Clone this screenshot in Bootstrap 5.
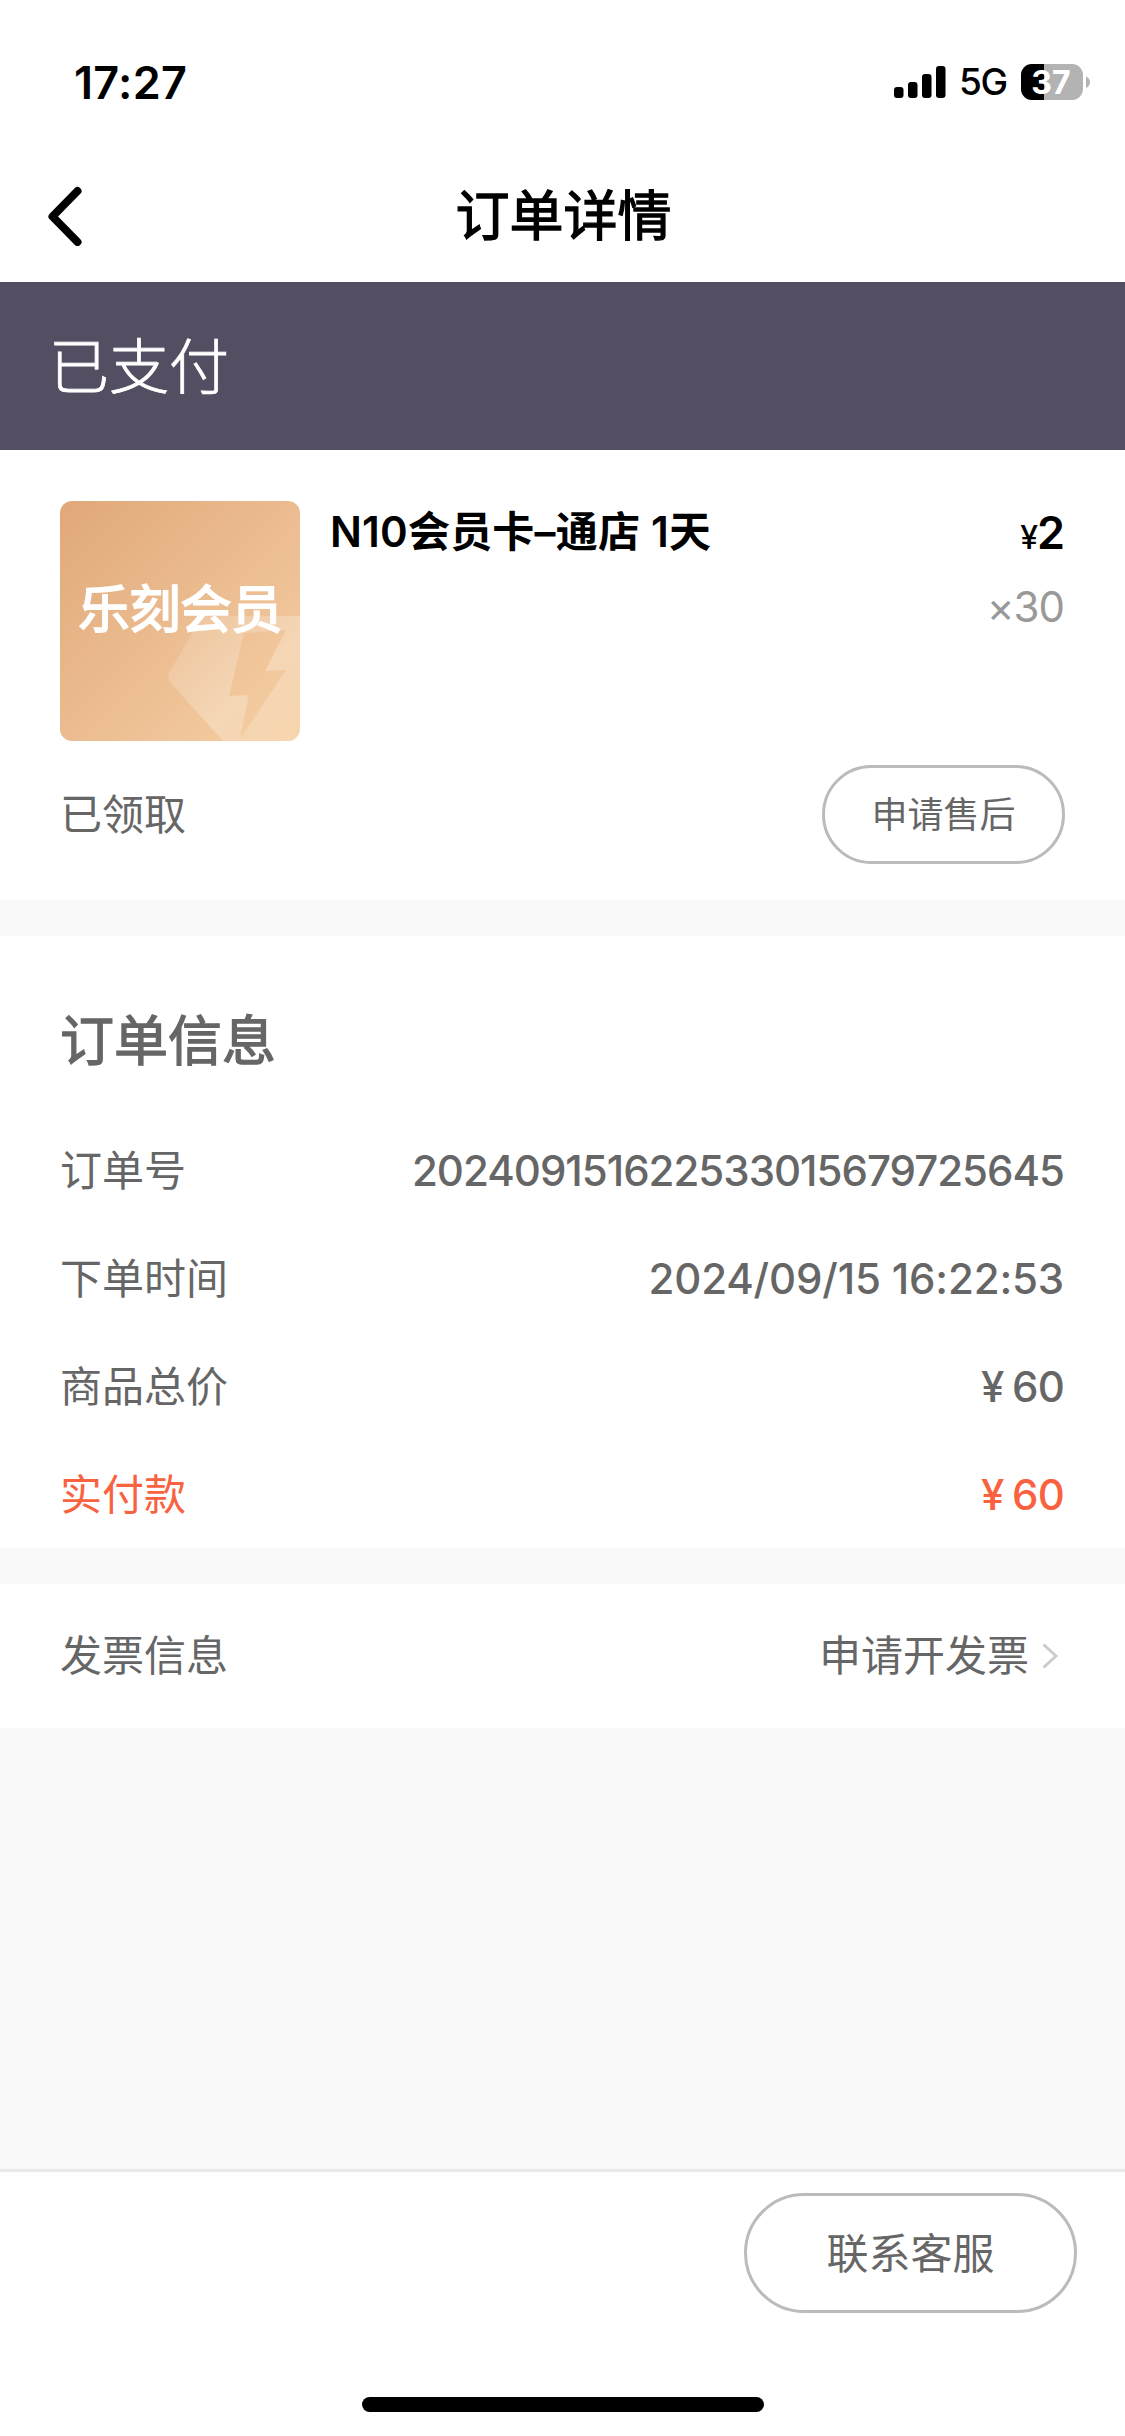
<!DOCTYPE html>
<html lang="zh-CN">
<head>
<meta charset="utf-8">
<meta name="viewport" content="width=device-width, initial-scale=1">
<title>订单详情</title>
<link href="https://cdn.jsdelivr.net/npm/bootstrap@5.3.0/dist/css/bootstrap.min.css" rel="stylesheet">
<style>
body{font-family:Inter,"Noto Sans CJK SC",sans-serif;font-size:42px;line-height:60px;color:#666;background:#f9f9f9}
.screen{height:2436px;overflow:hidden}
.status-bar{height:150px;padding:53px 34px 0 74px}
.clock{font-size:45px;font-weight:600;color:#000;letter-spacing:.3px}
.net-status{height:60px;margin-top:-1px}
.net{font-size:37px;font-weight:500;color:#000;letter-spacing:-1.4px;width:48px;margin:0 14px 0 13px}
.title-bar{height:132px;padding:0 48px}
.title-bar h1{font-size:54px;line-height:80px;font-weight:400;color:#000;padding:1px 34px 0 0}
.medium-cjk{-webkit-text-stroke:1.3px currentColor}
.state{height:168px;padding:2px 49px 0;background:#544e63;font-size:60px;font-weight:300;-webkit-text-stroke:.8px currentColor}
.goods{height:450px;padding:51px 60px 0}
.thumb{width:240px;height:240px;border-radius:12px}
.goods-name{color:#000;font-weight:600;padding:1px 0 0 30px;letter-spacing:.2px}
.taken{margin-top:24px}
.pill{border:3px solid #bbb;color:#666;border-radius:60px;padding:0}
.pill-sm{width:243px;height:99px;font-size:36px}
.pill-lg{width:333px;height:120px;font-size:42px}
.block{margin-top:36px}
.order{height:612px;padding:66px 60px 0}
.order h2{font-size:54px;line-height:80px;font-weight:400;margin:0 0 59px}
.line{height:108px}
.num{font-weight:500;letter-spacing:-.15px;padding-right:1px}
.num-long{letter-spacing:-1px}
.num-sum{word-spacing:-2px;letter-spacing:-.8px}
.paid{color:#f96240}
.invoice{height:144px;padding:0 60px}
.arrow{margin-left:13px}
.foot{height:267px;border-top:3px solid #e8e8ea;padding:21px 48px 24px 0}
.home-bar{width:402px;height:15px;border-radius:8px;background:#000;margin-left:362px}
.price{font-size:45px;color:#000;font-weight:600;letter-spacing:-1px;padding:2px 1px 0 0}
.price small{font-size:32px;font-weight:500}
.qty{color:#999;letter-spacing:-1px;padding:9px 1px 0 0}
</style>
</head>
<body>
<div class="screen d-flex flex-column">
  <header class="bg-white">
    <div class="status-bar d-flex justify-content-between align-items-start">
      <span class="clock">17:27</span>
      <div class="net-status d-flex align-items-center">
        <svg width="52" height="32" viewBox="0 0 52 32"><rect y="21" width="9.500" height="11" rx="3"/><rect x="14" y="16" width="9.500" height="16" rx="3"/><rect x="28" y="8" width="9.500" height="24" rx="3"/><rect x="42" width="9.500" height="32" rx="3"/></svg>
        <span class="net">5G</span>
        <svg width="70" height="36" viewBox="0 0 70 36"><defs><clipPath id="cell"><rect width="62" height="36" rx="11"/></clipPath></defs><g clip-path="url(#cell)"><rect width="62" height="36" fill="#b3b3b3"/><rect width="23" height="36"/></g><path d="M65 12.500q4 1.500 4 5.500t-4 6z" fill="#b3b3b3"/><text x="30" y="29.500" text-anchor="middle" font-size="32" font-weight="700" fill="#fff">37</text></svg>
      </div>
    </div>
    <div class="title-bar d-flex align-items-center">
      <svg width="36" height="60" viewBox="0 0 36 60" fill="none" stroke="#000" stroke-width="8" stroke-linecap="round" stroke-linejoin="round"><path d="M29.500 5 4.500 30.500 29.500 56"/></svg>
      <h1 class="medium-cjk flex-grow-1 text-center mb-0">订单详情</h1>
    </div>
  </header>
  <div class="state d-flex align-items-center text-white">已支付</div>

  <main class="flex-grow-1">
    <section class="goods bg-white">
      <div class="d-flex">
        <svg class="thumb flex-shrink-0" viewBox="0 0 240 240">
          <defs><linearGradient id="gold" x2="1" y2="1"><stop stop-color="#e0a87b"/><stop offset="1" stop-color="#f6d0a4"/></linearGradient>
          <linearGradient id="gem" x2="1" y2="1"><stop stop-color="#fff" stop-opacity=".1"/><stop offset=".6" stop-color="#fff" stop-opacity=".27"/><stop offset="1" stop-color="#fff" stop-opacity=".1"/></linearGradient></defs>
          <rect width="240" height="240" fill="url(#gold)"/>
          <path fill="url(#gem)" fill-rule="evenodd" d="M142 115H240V240H163L110 181Q107 177 109 172ZM184 132 169 195 189 194 180 238 226 169 205 170 226 129Z"/>
          <text x="120.500" y="127" text-anchor="middle" font-size="51" font-weight="400" fill="#fff" stroke="#fff" stroke-width="2">乐刻会员</text>
        </svg>
        <div class="goods-name flex-grow-1">N10会员卡–通店 1天</div>
        <div class="text-end">
          <div class="price"><small>¥</small>2</div>
          <div class="qty">×30</div>
        </div>
      </div>
      <div class="taken d-flex justify-content-between align-items-center">
        <span>已领取</span>
        <button type="button" class="btn pill pill-sm">申请售后</button>
      </div>
    </section>

    <section class="order block bg-white">
      <h2 class="medium-cjk">订单信息</h2>
      <div class="line d-flex justify-content-between"><span>订单号</span><span class="num num-long">202409151622533015679725645</span></div>
      <div class="line d-flex justify-content-between"><span>下单时间</span><span class="num">2024/09/15 16:22:53</span></div>
      <div class="line d-flex justify-content-between"><span>商品总价</span><span class="num num-sum">¥ 60</span></div>
      <div class="line d-flex justify-content-between paid"><span>实付款</span><span class="num num-sum">¥ 60</span></div>
    </section>

    <section class="invoice block bg-white d-flex justify-content-between align-items-center">
      <span>发票信息</span>
      <span class="d-flex align-items-center">申请开发票
        <svg class="arrow" width="23" height="26" viewBox="0 0 23 26" fill="none" stroke="#ccc" stroke-width="3"><path d="M1.500 1.500 14 13 1.500 24.500"/></svg></span>
    </section>
  </main>

  <footer class="foot bg-white d-flex flex-column justify-content-between">
    <button type="button" class="btn pill pill-lg align-self-end">联系客服</button>
    <div class="home-bar"></div>
  </footer>
</div>
<script src="https://cdn.jsdelivr.net/npm/bootstrap@5.3.0/dist/js/bootstrap.bundle.min.js"></script>
</body>
</html>
